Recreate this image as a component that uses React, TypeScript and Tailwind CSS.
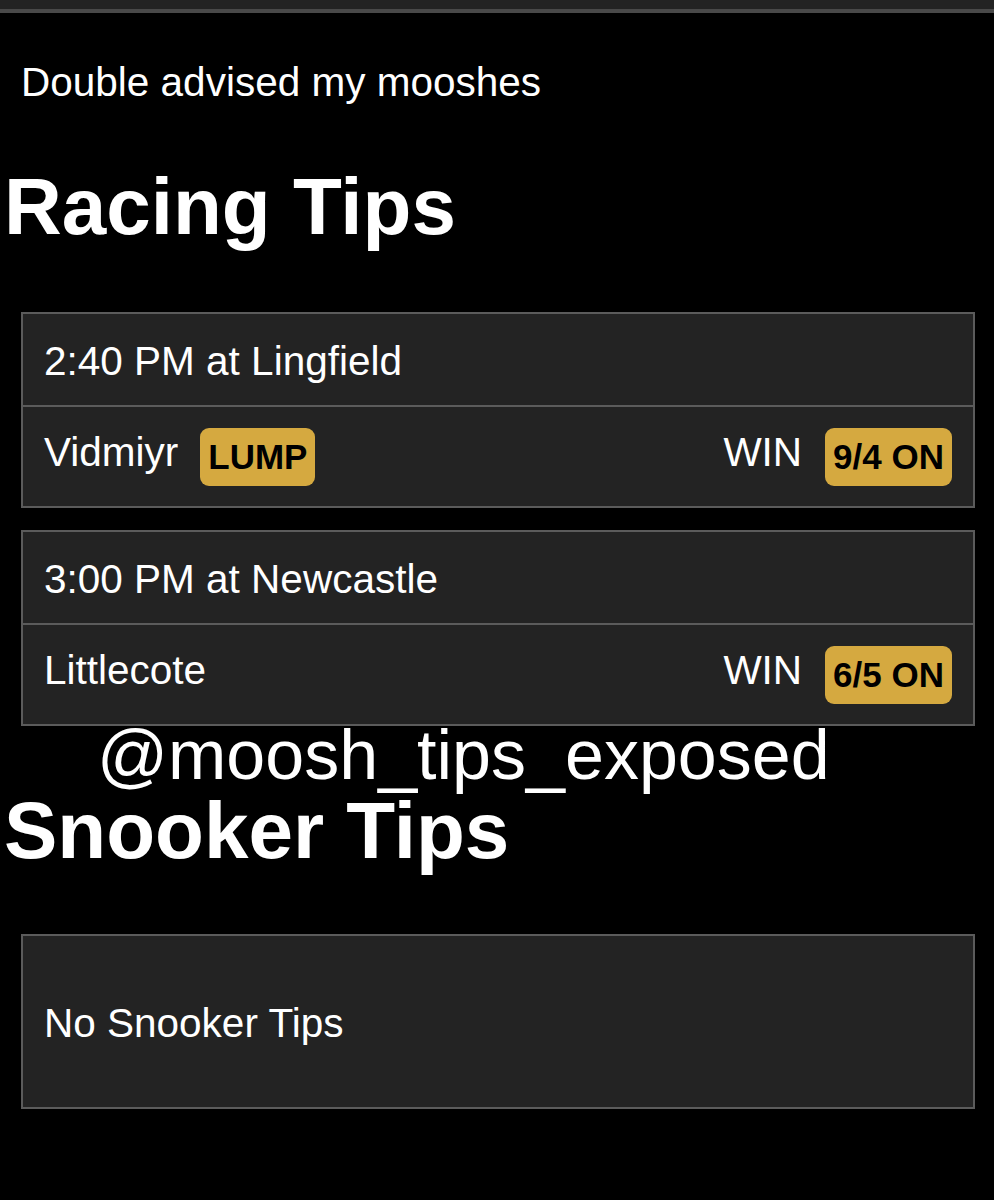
import React from 'react';

type Tip = {
	time: string;
	course: string;
	horse: string;
	tag?: string;
	bet: string;
	odds: string;
};

const racingTips: Tip[] = [
	{ time: '2:40 PM', course: 'Lingfield', horse: 'Vidmiyr', tag: 'LUMP', bet: 'WIN', odds: '9/4 ON' },
	{ time: '3:00 PM', course: 'Newcastle', horse: 'Littlecote', bet: 'WIN', odds: '6/5 ON' },
];

// gold pill used for stake size and odds
const Badge = ({ children }: { children: React.ReactNode }) => (
	<span className="flex h-[58px] items-center rounded-[9px] bg-[#d5a940] px-2 text-[35px] font-bold leading-[40px] text-black">
		{children}
	</span>
);

const TipCard = ({ tip }: { tip: Tip }) => (
	<div className="border-2 border-[#5b5b5b] bg-[#232323]">
		<div className="border-b-2 border-[#5b5b5b] px-[21px] pt-6 pb-[21px] text-[40.5px] leading-[46px]">
			{tip.time} at {tip.course}
		</div>
		<div className="flex h-[99px] items-center justify-between px-[21px]">
			<div className="flex items-center gap-[22px]">
				<span className="mb-[9px] text-[40.5px] leading-[46px]">{tip.horse}</span>
				{tip.tag && <Badge>{tip.tag}</Badge>}
			</div>
			<div className="flex items-center gap-[23px]">
				<span className="mb-[9px] text-[40.5px] leading-[46px]">{tip.bet}</span>
				<Badge>{tip.odds}</Badge>
			</div>
		</div>
	</div>
);

export default function App() {
	return (
		<div className="relative min-h-[1200px] bg-black font-['Liberation_Sans',Arial,sans-serif] text-white">
			{/* top bar */}
			<div className="h-[13px] border-b-4 border-[#494949] bg-[#232323]" />

			<div className="px-[21px]">
				<p className="mt-[46px] text-[40.5px] leading-[46px]">Double advised my mooshes</p>
			</div>

			<h2 className="mt-[56px] mb-[59px] px-[4px] text-[80px] font-bold leading-[92px]">Racing Tips</h2>

			<div className="flex flex-col gap-[22px] pl-[21px] pr-[19px]">
				{racingTips.map((tip) => (
					<TipCard key={tip.time} tip={tip} />
				))}
			</div>

			<h2 className="mt-[59px] mb-[57px] px-[4px] text-[80px] font-bold leading-[92px]">Snooker Tips</h2>

			<div className="pl-[21px] pr-[19px]">
				<div className="border-2 border-[#5b5b5b] bg-[#232323] px-[21px] pt-16 pb-[61px] text-[40.5px] leading-[46px]">
					No Snooker Tips
				</div>
			</div>

			{/* handle stamped across the page */}
			<div className="absolute top-[720px] left-[97px] text-[70px] leading-none text-white">@moosh_tips_exposed</div>
		</div>
	);
}
